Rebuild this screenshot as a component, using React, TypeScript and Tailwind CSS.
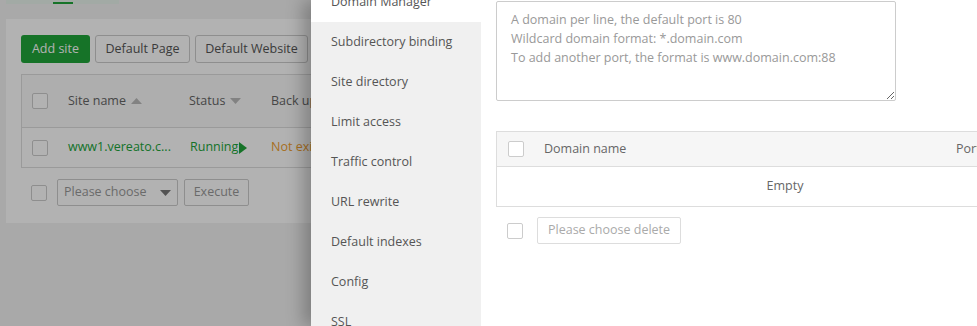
import React from 'react';

const menu = [
  'Domain Manager',
  'Subdirectory binding',
  'Site directory',
  'Limit access',
  'Traffic control',
  'URL rewrite',
  'Default indexes',
  'Config',
  'SSL',
];

function Box({ className = '' }: { className?: string }) {
  return <span className={`block w-[16px] h-[16px] border border-[#ccc] rounded-[2px] bg-white shrink-0 ${className}`} />;
}

function Tri({ dir, color, className = '' }: { dir: 'up' | 'down' | 'right'; color: string; className?: string }) {
  if (dir === 'right') {
    return (
      <svg width="8" height="12" viewBox="0 0 8 12" className={className}>
        <polygon points="0,0 8,6 0,12" fill={color} />
      </svg>
    );
  }
  return (
    <svg width="11" height="6" viewBox="0 0 11 6" className={className}>
      <polygon points={dir === 'up' ? '0,6 5.5,0 11,6' : '0,0 11,0 5.5,6'} fill={color} />
    </svg>
  );
}

export default function App() {
  return (
    <div className="relative w-[977px] h-[326px] overflow-hidden bg-[#f2f2f2] text-[12.5px] text-[#666] font-['Open_Sans',sans-serif]">
      {/* Background page */}
      <div className="px-[6px]">
        <div className="h-[4px] w-[113px] bg-[#e9f4ec] pl-[47px] pt-[2px]">
          <div className="h-[2px] w-[20px] bg-[#20a53a]" />
        </div>
        <div className="mt-[15px] w-[600px] h-[204px] bg-white px-[15px] pt-[16px]">
          <div className="flex gap-[5px] h-[28px]">
            <button className="w-[69px] rounded-[3px] bg-[#20a53a] text-white">Add site</button>
            <button className="w-[95px] rounded-[3px] border border-[#ccc] text-[#555]">Default Page</button>
            <button className="w-[113px] rounded-[3px] border border-[#ccc] text-[#555]">Default Website</button>
          </div>
          <div className="mt-[11px] border border-[#ddd] w-[560px]">
            <div className="h-[53px] flex items-center pl-[10px] bg-[#f9f9f9] border-b border-[#ddd]">
              <Box />
              <span className="ml-[20px] w-[121px] flex items-center gap-[5px]">
                Site name <Tri dir="up" color="#bbb" />
              </span>
              <span className="w-[82px] flex items-center gap-[5px]">
                Status <Tri dir="down" color="#bbb" />
              </span>
              <span>Back up</span>
            </div>
            <div className="h-[39px] flex items-center pl-[10px]">
              <Box />
              <span className="ml-[20px] w-[122px] text-[#20a53a]">www1.vereato.c...</span>
              <span className="w-[81px] text-[#20a53a] flex items-center">
                Running
                <Tri dir="right" color="#20a53a" className="ml-[1px]" />
              </span>
              <span className="text-[#f0a030]">Not exist</span>
            </div>
          </div>
          <div className="mt-[11px] flex items-center">
            <Box className="ml-[10px]" />
            <div className="ml-[10px] w-[121px] h-[27px] border border-[#ccc] rounded-[2px] flex items-center justify-between pl-[6px] pr-[6px] text-[#999]">
              Please choose <Tri dir="down" color="#777" />
            </div>
            <button className="ml-[6px] w-[65px] h-[27px] border border-[#ccc] rounded-[2px] text-[#999]">Execute</button>
          </div>
        </div>
      </div>

      {/* Modal overlay */}
      <div className="absolute inset-0 bg-black/30" />

      {/* Side panel */}
      <div className="absolute left-[311px] top-0 right-0 bottom-0 flex bg-white shadow-[-8px_0_16px_rgba(0,0,0,0.25)]">
        <div className="w-[170px] bg-[#f0f0f0] text-[#555]">
          <ul className="-mt-[18px]">
            {menu.map((m, i) => (
              <li key={m} className={`h-[40px] pl-[20px] flex items-center ${i === 0 ? 'bg-white' : ''}`}>
                {m}
              </li>
            ))}
          </ul>
        </div>
        <div className="flex-1 pl-[15px] pt-[1px] overflow-hidden">
          <textarea
            className="block w-[400px] h-[100px] border border-[#ccc] rounded-[2px] px-[14px] py-[8px] leading-[19px] placeholder:text-[#999] outline-none"
            placeholder={'A domain per line, the default port is 80\nWildcard domain format: *.domain.com\nTo add another port, the format is www.domain.com:88'}
          />
          <div className="mt-[30px] w-[578px] border border-[#ddd]">
            <div className="h-[35px] flex items-center pl-[11px] bg-[#f6f6f6] border-b border-[#ddd]">
              <Box />
              <span className="ml-[20px] w-[412px]">Domain name</span>
              <span>Port</span>
            </div>
            <div className="h-[39px] flex items-center justify-center">Empty</div>
          </div>
          <div className="mt-[10px] flex items-center">
            <Box className="ml-[11px]" />
            <button className="ml-[14px] h-[27px] px-[10px] border border-[#ddd] rounded-[2px] text-[#aaa]">
              Please choose delete
            </button>
          </div>
        </div>
      </div>
    </div>
  );
}
